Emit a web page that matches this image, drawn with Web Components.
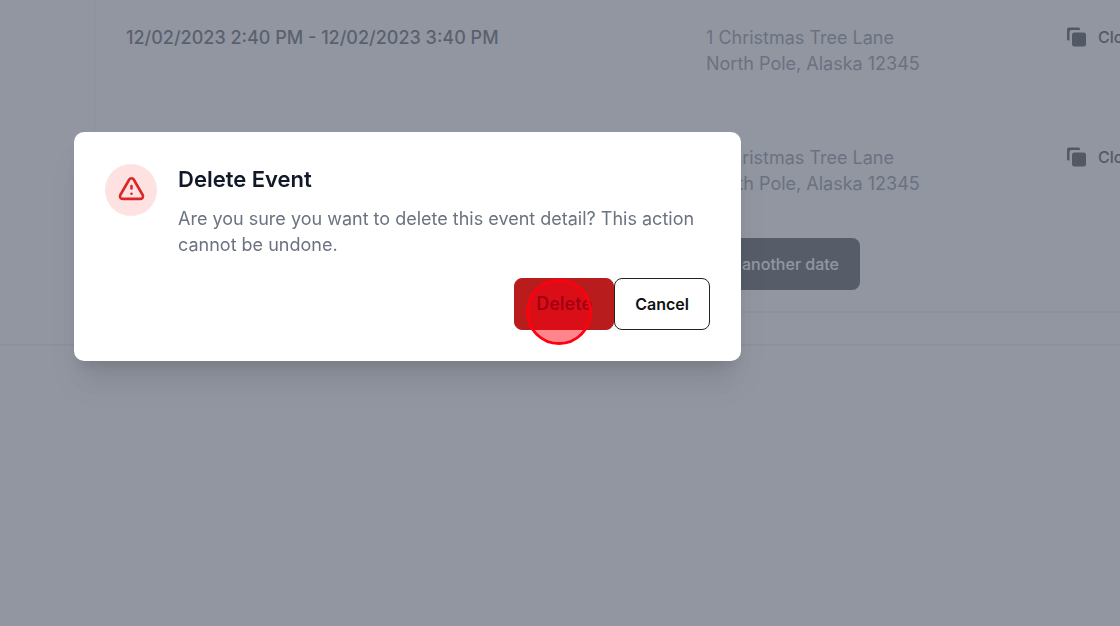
<!DOCTYPE html>
<html lang="en">
<head>
<meta charset="utf-8">
<meta name="viewport" content="width=device-width, initial-scale=1">
<title>Delete Event</title>
<style>
  html, body { margin: 0; min-height: 100%; background: #fff; }
  body { font-family: Inter, "Liberation Sans", sans-serif; font-size: 18px; line-height: 26px; overflow: hidden; }
</style>
</head>
<body>
<event-page>
  <event-row>
    <span slot="date">12/02/2023 2:40 PM - 12/02/2023 3:40 PM</span>
    <span slot="street">1 Christmas Tree Lane</span>
    <span slot="city">North Pole, Alaska 12345</span>
  </event-row>
  <event-row>
    <span slot="date">12/02/2023 2:40 PM - 12/02/2023 3:40 PM</span>
    <span slot="street">1 Christmas Tree Lane</span>
    <span slot="city">North Pole, Alaska 12345</span>
  </event-row>
</event-page>
<confirm-dialog>
  <span slot="title">Delete Event</span>
  <span slot="message">Are you sure you want to delete this event detail? This action cannot be undone.</span>
  <dialog-button slot="actions" kind="danger">Delete</dialog-button>
  <dialog-button slot="actions">Cancel</dialog-button>
</confirm-dialog>

<template id="event-page">
  <style>
    :host { display: block; border-bottom: 2px solid #e8eaed; padding: 0 0 31px 94px; }
    section { border: solid #e8eaed; border-width: 0 0 2px 1px; padding-left: 31px; overflow: hidden; }
    .rows { display: grid; gap: 20px; padding-top: 25px; }
    footer { display: flex; justify-content: flex-end; margin-top: -7px; padding: 0 260px 21px 0; }
    button { font: 500 16px/26px Inter, sans-serif; color: #fff; background: #1f2028; border: 0; border-radius: 8px; padding: 13px 21px; white-space: nowrap; }
  </style>
  <section>
    <div class="rows"><slot></slot></div>
    <footer><button type="button">Add another date</button></footer>
  </section>
</template>

<template id="event-row">
  <style>
    :host { display: grid; grid-template-columns: minmax(0, 1fr) 360px 54px; min-height: 100px; }
    .date { color: #2c323d; font-weight: 500; }
    address { font-style: normal; color: #6b7280; }
    address ::slotted(span) { display: block; }
    button { align-self: start; display: flex; gap: 11px; align-items: center; font: 500 16px/24px Inter, sans-serif; color: #111018; background: none; border: 0; padding: 0; white-space: nowrap; }
    svg { flex: none; }
  </style>
  <div class="date"><slot name="date"></slot></div>
  <address><slot name="street"></slot><slot name="city"></slot></address>
  <button type="button">
    <svg width="21" height="21" viewBox="0 0 21 21" aria-hidden="true">
      <path d="M3.5 13.5H2.6A1.6 1.6 0 0 1 1 11.9V2.5A2 2 0 0 1 3 .5H12.5A1.5 1.5 0 0 1 14 2V3H5.5A2 2 0 0 0 3.500 5Z" fill="currentColor"/>
      <rect x="6" y="5.5" width="14" height="14" rx="2.5" fill="currentColor"/>
    </svg>
    Clone
  </button>
</template>

<template id="confirm-dialog">
  <style>
    :host { position: fixed; inset: 0; background: rgba(107, 114, 128, .74); padding: 132px 74px; }
    .panel { display: flex; gap: 21px; box-sizing: border-box; max-width: 667px; padding: 32px 31px 31px; background: #fff; border-radius: 10px; box-shadow: 0 26px 32px -6px rgba(0,0,0,.1), 0 10px 13px -6px rgba(0,0,0,.1); }
    .icon { flex: none; width: 52px; height: 52px; border-radius: 50%; background: #fee2e2; display: grid; place-items: center; }
    .body { flex: 1; }
    h2 { margin: 0; font-size: 22px; line-height: 30px; font-weight: 600; color: #111827; }
    p { margin: 12px 0 20px; color: #6b7280; }
    .actions { display: flex; justify-content: flex-end; }
  </style>
  <div class="panel" role="dialog" aria-modal="true" aria-labelledby="title">
    <div class="icon">
      <svg width="31" height="31" viewBox="0 0 24 24" fill="none" stroke="#dc2626" stroke-width="2" stroke-linecap="round" stroke-linejoin="round" aria-hidden="true">
        <path d="M12 8.5v2m0 4h.01M5.07 18.500h13.86c1.54 0 2.5-1.67 1.73-3L13.73 3.500c-.77-1.33-2.69-1.33-3.46 0L3.34 15.500c-.77 1.33.19 3 1.73 3z"/>
      </svg>
    </div>
    <div class="body">
      <h2 id="title"><slot name="title"></slot></h2>
      <p><slot name="message"></slot></p>
      <div class="actions"><slot name="actions"></slot></div>
    </div>
  </div>
</template>

<template id="dialog-button">
  <style>
    :host { display: block; position: relative; }
    button { display: block; font: 600 16px/26px Inter, sans-serif; color: #111; background: #fff; border: 1px solid #222; border-radius: 8px; padding: 12px 20px; }
    :host([kind="danger"]) button { color: #4a0010; background: #b91c1c; border-color: #b91c1c; font-size: 18px; padding: 12px 21px; }
    .click { display: none; }
    :host([kind="danger"]) .click { display: block; position: absolute; left: 12px; top: 1px; box-sizing: border-box; width: 66px; height: 66px; border-radius: 50%; border: 3px solid #ff0010; background: rgba(255, 0, 16, .48); background-clip: padding-box; pointer-events: none; }
  </style>
  <button type="button"><slot></slot></button>
  <span class="click"></span>
</template>

<script>
  for (const name of ["event-page", "event-row", "confirm-dialog", "dialog-button"]) {
    customElements.define(name, class extends HTMLElement {
      constructor() {
        super();
        this.attachShadow({ mode: "open" }).append(document.getElementById(name).content.cloneNode(true));
      }
    });
  }
</script>
</body>
</html>
